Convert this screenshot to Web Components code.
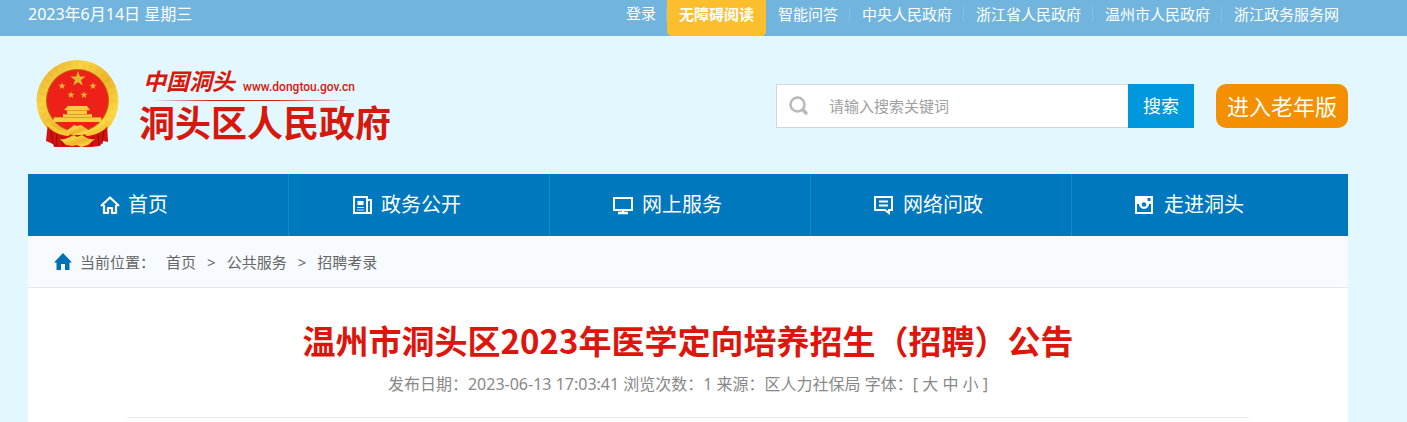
<!DOCTYPE html>
<html lang="zh-CN">
<head>
<meta charset="utf-8">
<title>温州市洞头区2023年医学定向培养招生（招聘）公告</title>
<style>
  body {
    margin: 0;
    background: #e2f7ff;
    color: #666;
    font: 15px/28px "Noto Sans", "Noto Sans CJK SC", sans-serif;
    --gutter-left: 28px;
    --gutter-right: 59px;
  }
  main { margin: 0 var(--gutter-right) 0 var(--gutter-left); }
</style>
</head>
<body>
<top-bar>
  <span slot="date">2023年6月14日 星期三</span>
  <top-link class="plain">登录</top-link>
  <top-link class="accent">无障碍阅读</top-link>
  <top-link>智能问答</top-link>
  <top-link>中央人民政府</top-link>
  <top-link>浙江省人民政府</top-link>
  <top-link>温州市人民政府</top-link>
  <top-link class="last">浙江政务服务网</top-link>
</top-bar>
<site-header>
  <site-logo></site-logo>
  <search-box></search-box>
  <elder-button>进入老年版</elder-button>
</site-header>
<main>
  <main-nav>
    <nav-item icon="home" class="short">首页</nav-item>
    <nav-item icon="news">政务公开</nav-item>
    <nav-item icon="screen">网上服务</nav-item>
    <nav-item icon="chat">网络问政</nav-item>
    <nav-item icon="camera" class="last">走进洞头</nav-item>
  </main-nav>
  <bread-crumb></bread-crumb>
  <article-head>
    温州市洞头区2023年医学定向培养招生（招聘）公告
    <span slot="meta">发布日期：2023-06-13 17:03:41 浏览次数：1 来源：区人力社保局 字体：</span>
  </article-head>
</main>

<script>
const define = (name, html, setup) => customElements.define(name, class extends HTMLElement {
  constructor() {
    super();
    const t = document.createElement('template');
    t.innerHTML = html;
    this.attachShadow({ mode: 'open' }).append(t.content.cloneNode(true));
    if (setup) setup(this, this.shadowRoot);
  }
});

define('top-bar', `
<style>
  :host { display: flex; justify-content: space-between; height: 36px; background: #71b5de; color: #fff;
    padding: 0 68px 0 var(--gutter-left); white-space: nowrap; }
  nav { display: flex; }
  ::slotted(span) { font-size: 16px; }
</style>
<slot name="date"></slot>
<nav><slot></slot></nav>`);

define('top-link', `
<style>
  :host { display: block; }
  a { display: block; height: 100%; padding: 0 12px; color: #fff; text-decoration: none; position: relative; }
  a::after { content: ""; position: absolute; right: 0; top: 7px; width: 1px; height: 15px; background: #7fc0e6; }
  :host(.plain) a { padding: 0 11px; line-height: 26px; }
  :host(.accent) a { background: #fbbe2c; border-radius: 0 0 5px 5px; font-weight: 700; }
  :host(.accent) a::after, :host(.last) a::after { display: none; }
  :host(.last) a { padding-right: 0; }
</style>
<a href="#"><slot></slot></a>`);

define('site-header', `
<style>
  :host { display: flex; align-items: flex-start; padding: 24px var(--gutter-right) 0 36px; height: 114px; }
  ::slotted(search-box) { margin: 24px 22px 0 auto; }
  ::slotted(elder-button) { margin-top: 24px; }
</style>
<slot></slot>`);

define('site-logo', `
<style>
  :host { display: flex; gap: 20px; color: #d7180c; white-space: nowrap; }
  svg { display: block; flex: none; }
  .top { display: flex; align-items: flex-start; padding: 8px 0 0 4px; gap: 8px; height: 32px; }
  .brush { font: italic 700 23px/30px Roboto, "Noto Sans CJK SC", sans-serif; }
  .url { font: 500 12px/38px Roboto, sans-serif; }
  .rule { height: 1px; margin: 0 36px 0 12px; background: linear-gradient(90deg, transparent, #d7180c 30%, #d7180c 60%, transparent); }
  .name { font: 700 36px/48px Roboto, "Noto Sans CJK SC", sans-serif; }
</style>
<svg width="83" height="88" viewBox="0 0 83 88" aria-hidden="true">
  <defs>
    <linearGradient id="gold" x1="0" y1="0" x2="1" y2="1">
      <stop offset="0" stop-color="#dda426"/><stop offset=".3" stop-color="#fbd443"/>
      <stop offset=".55" stop-color="#ecb52c"/><stop offset=".8" stop-color="#ffd943"/><stop offset="1" stop-color="#d79c1c"/>
    </linearGradient>
    <path id="star" d="M0-8 1.900-2.600 7.600-2.500 3.100 1 4.700 6.500 0 3.200-4.700 6.500-3.100 1-7.600-2.500-1.900-2.600Z"/>
  </defs>
  <circle cx="41.500" cy="41" r="41" fill="url(#gold)"/>
  <circle cx="41.500" cy="41" r="36" fill="none" stroke="#c48a18" stroke-width="5" stroke-dasharray="2 5" opacity=".12"/>
  <circle cx="41.500" cy="40.500" r="31" fill="#ee2119" stroke="#b5680d"/>
  <path d="M12 62C20 72 30 75 41 75S63 72 71 62L72 82 67 81 64 86 55 87H28L18 87 17 84 10 81Z" fill="#d4120f"/>
  <path d="M15 70 17 84M21 74 20 86M26 77 27 86M68 70 66 84M62 74 63 85M57 77 56 86" stroke="#8f0b09" stroke-width="1"/>
  <g fill="#e5b72e">
    <use href="#star" x="42" y="19"/>
    <use href="#star" transform="translate(26 26) scale(.47)"/>
    <use href="#star" transform="translate(57 26) scale(.47)"/>
    <use href="#star" transform="translate(35 35) scale(.47)"/>
    <use href="#star" transform="translate(48 35) scale(.47)"/>
  </g>
  <path d="M32 46H51L54 50H51V54H56V57H65L66 62H17L18 57H27V54H31V50H28Z" fill="#f8cd43"/>
  <path d="M30 50.500H53M28 54.500H55M18 57.500H65" stroke="#c88b18" stroke-width=".7"/>
  <path d="M12 61C18 69 27 72 34 72L33 76C24 76 14 71 9 63ZM71 61C65 69 56 72 49 72L50 76C59 76 69 71 74 63Z" fill="#f7c933"/>
  <path d="M33 69 38 65 41 66 45 65 51 69 54 72 49 73 45 75H38L34 73 30 72Z" fill="url(#gold)"/>
  <path d="M24 79C31 80 34 76 38 75L41 77 46 75C50 77 52 80 59 79L52 85 45 87 41 85 36 86 30 85Z" fill="url(#gold)"/>
</svg>
<div>
  <div class="top"><span class="brush">中国洞头</span><span class="url">www.dongtou.gov.cn</span></div>
  <div class="rule"></div>
  <div class="name">洞头区人民政府</div>
</div>`);

define('search-box', `
<style>
  :host { display: block; }
  form { display: flex; height: 44px; margin: 0; }
  label { display: flex; align-items: center; gap: 20px; width: 352px; box-sizing: border-box; padding-left: 12px;
    background: #fff; border: 1px solid #d3d7d9; border-right: 0; }
  svg { flex: none; }
  input { flex: 1; min-width: 0; border: 0; outline: 0; padding: 0; background: none; font: inherit; color: #333; }
  input::placeholder { color: #a0a0a0; opacity: 1; }
  button { width: 66px; border: 0; padding: 0; background: #0098dd; color: #fff; font: inherit; font-size: 18px; }
</style>
<form>
  <label>
    <svg width="20" height="20" viewBox="0 0 20 20" fill="none" stroke="#b9b9b9" aria-hidden="true"><circle cx="8.500" cy="8.500" r="7" stroke-width="2.500"/><path d="m14 14 3 3" stroke-width="3.500" stroke-linecap="round"/></svg>
    <input type="text" placeholder="请输入搜索关键词" aria-label="请输入搜索关键词">
  </label>
  <button type="button">搜索</button>
</form>`);

define('elder-button', `
<style>
  :host { display: block; }
  button { display: block; width: 132px; height: 44px; padding: 0; border: 0; border-radius: 10px; background: #f49000; color: #fff;
    font: inherit; font-size: 22px; white-space: nowrap; }
</style>
<button type="button"><slot></slot></button>`);

define('main-nav', `
<style>
  :host { display: block; background: #0078be; }
  nav { display: grid; grid-template-columns: 261fr 261fr 261fr 261fr 276fr; }
</style>
<nav><slot></slot></nav>`);

const icons = {
  home: '<path d="M1 11 10 2.500 19 11M4 10V18H8V13H12V18H16V10" stroke-width="2.200" stroke-linejoin="round"/>',
  news: '<path d="M2 2H15V18H2ZM15 5H19V18H14" stroke-width="2"/><path d="M5.500 6H11.500V10H5.500Z" fill="#fff" stroke="none"/><path d="M5 12.500H12M5 15H12" stroke-width="1" opacity=".8"/>',
  screen: '<path d="M1 3H19V15H1Z" stroke-width="2"/><path d="M10 15V18M5 18H15" stroke-width="2.400"/>',
  chat: '<path d="M1 2H18V15H15V18L11 15H1Z" stroke-width="2"/><path d="M5 6.500H14M5 10.500H14" stroke-width="1.800"/>',
  camera: '<path d="M0 1H18V19H0ZM12.500 3V6H15.500V3ZM2 9V17H16V9H14A5 5 0 0 1 4 9Z" fill="#fff" fill-rule="evenodd" stroke="none"/><circle cx="9" cy="9.500" r="2.200" fill="#0078be" stroke="none"/>'
};
define('nav-item', `
<style>
  :host { display: block; }
  a { display: flex; align-items: center; gap: 9px; height: 62px; padding-left: 63px; box-sizing: border-box;
    border-right: 1px solid #1c87c6; color: #fff; text-decoration: none; font-size: 20px; white-space: nowrap; }
  :host(.short) a { padding-left: 72px; gap: 8px; }
  :host(.last) a { border: 0; }
  svg { flex: none; }
</style>
<a href="#"><svg width="20" height="20" viewBox="0 0 20 20" fill="none" stroke="#fff" aria-hidden="true"></svg><slot></slot></a>`,
(host, root) => { root.querySelector('svg').innerHTML = icons[host.getAttribute('icon')]; });

define('bread-crumb', `
<style>
  :host { display: block; background: #f7fbff; border-bottom: 1px solid #e5e7ea; }
  nav { display: flex; align-items: center; gap: 11px; height: 51px; padding-left: 26px; white-space: nowrap; }
  .here { display: flex; align-items: center; gap: 8px; }
  a { color: inherit; text-decoration: none; }
</style>
<nav aria-label="当前位置">
  <span class="here"><svg width="18" height="18" viewBox="0 0 18 18" fill="#0070b4" aria-hidden="true"><path d="M9 0 18 9.500H15.500V17H11V11H7V17H2.500V9.500H0Z"/></svg>
  <span>当前位置：</span></span><a href="#">首页</a><span>&gt;</span><a href="#">公共服务</a><span>&gt;</span><a href="#">招聘考录</a>
</nav>`);

define('article-head', `
<style>
  :host { display: block; background: #fff; text-align: center; padding-top: 28px; min-height: 106px; }
  h1 { margin: 0; color: #dd150c; font: 700 33px/48px "Noto Sans CJK SC", sans-serif; }
  .meta { width: 85%; margin: 0 auto; padding: 6px 0 19px; border-bottom: 1px solid #e8e8ee; color: #888; font-size: 16px; }
  a { color: inherit; text-decoration: none; }
</style>
<h1><slot></slot></h1>
<div class="meta"><slot name="meta"></slot>[ <a href="#">大</a> <a href="#">中</a> <a href="#">小</a> ]</div>`);
</script>
</body>
</html>
